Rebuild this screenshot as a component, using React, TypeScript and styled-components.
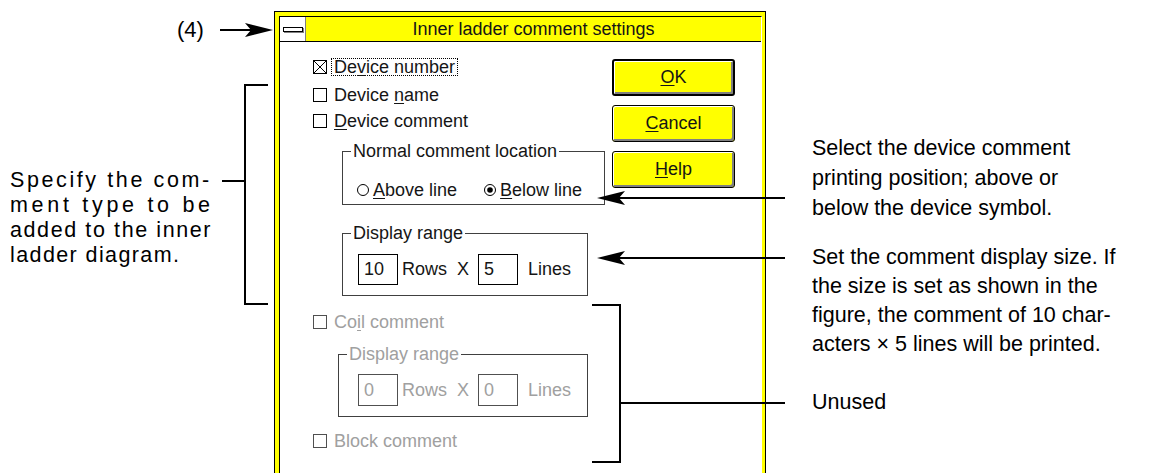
import React from 'react';
import styled, { createGlobalStyle } from 'styled-components';

const GlobalStyle = createGlobalStyle`
  html, body {
    margin: 0;
    padding: 0;
    background: #fff;
  }
  body {
    font-family: "Liberation Sans", Arial, sans-serif;
    color: #000;
  }
`;

const YELLOW = '#ffff00';

const Figure = styled.div`
  position: relative;
  display: flex;
  width: 1176px;
  height: 473px;
  overflow: hidden;
  background: #fff;
`;

/* ---------- annotations ---------- */

const LeftNotes = styled.div`
  flex: none;
  width: 274px;
  display: flex;
  flex-direction: column;
`;

const RightNotes = styled.div`
  flex: 1;
  display: flex;
  flex-direction: column;
  padding-left: 46px;
`;

const Tag = styled.div`
  margin: 18px 0 0 177px;
  font-size: 22px;
  line-height: 24px;
`;

const Note = styled.div<{ $top: number; $left?: number; $lh: number }>`
  margin-top: ${({ $top }) => $top}px;
  padding-left: ${({ $left }) => $left ?? 0}px;
  font-size: 21.5px;
  line-height: ${({ $lh }) => $lh}px;
  white-space: nowrap;
`;

const NoteLine = styled.div<{ $track?: number }>`
  letter-spacing: ${({ $track }) => $track ?? 0}px;
`;

const Callouts = styled.svg`
  position: absolute;
  left: 0;
  top: 0;
  pointer-events: none;
`;

/* ---------- dialog window ---------- */

const Window = styled.section`
  flex: none;
  box-sizing: border-box;
  width: 492px;
  height: 480px;
  margin-top: 11px;
  border: 1px solid #000;
  background: ${YELLOW};
  padding: 4px 3px 0 4px;
  display: flex;
  flex-direction: column;
  color: #151515;
`;

const Client = styled.div`
  flex: 1;
  display: flex;
  flex-direction: column;
  border: 1px solid #000;
  border-right-color: #fff;
  border-bottom: none;
  background: #fff;
`;

const TitleBar = styled.div`
  display: flex;
  height: 24px;
  border-bottom: 1px solid #000;
  background: ${YELLOW};
`;

const MenuBox = styled.div`
  flex: none;
  width: 25px;
  display: flex;
  align-items: center;
  justify-content: center;
  background: #fff;
  border-right: 1px solid #808080;
`;

const MenuGlyph = styled.div`
  width: 18px;
  height: 3px;
  border: 1px solid #000;
  background: #fff;
  box-shadow: 1px 1px 0 #808080;
`;

const Title = styled.div`
  flex: 1;
  text-align: center;
  font-size: 18px;
  line-height: 24px;
`;

const Body = styled.div`
  flex: 1;
  display: grid;
  grid-template-columns: 332px 123px;
  align-items: start;
`;

const Options = styled.div`
  display: flex;
  flex-direction: column;
  align-items: flex-start;
  padding-left: 33px;
`;

const CheckRow = styled.div<{ $top: number }>`
  display: flex;
  align-items: center;
  height: 20px;
  margin-top: ${({ $top }) => $top}px;
`;

const Label = styled.span<{ $disabled?: boolean; $focused?: boolean }>`
  margin-left: 4px;
  padding: 0 2px;
  font-size: 18px;
  line-height: 16px;
  color: ${({ $disabled }) => ($disabled ? '#a0a0a0' : 'inherit')};
  border: 1px dotted ${({ $focused }) => ($focused ? '#000' : 'transparent')};
  white-space: nowrap;
`;

const Key = styled.u`
  text-decoration-thickness: 1px;
  text-underline-offset: 2px;
`;

const Group = styled.fieldset<{
  $top: number;
  $indent: number;
  $width: number;
  $pad: string;
}>`
  box-sizing: border-box;
  width: ${({ $width }) => $width}px;
  margin: ${({ $top }) => $top}px 0 0 ${({ $indent }) => $indent}px;
  padding: ${({ $pad }) => $pad};
  border: 1px solid #404040;
  min-inline-size: 0;
`;

const Legend = styled.legend<{ $disabled?: boolean }>`
  margin-left: 8px;
  padding: 0 2px;
  font-size: 18px;
  line-height: 20px;
  color: ${({ $disabled }) => ($disabled ? '#a0a0a0' : 'inherit')};
`;

const RadioRow = styled.div`
  display: flex;
  align-items: center;
  height: 20px;
  gap: 27px;
  padding-left: 14px;
`;

const Radio = styled.label`
  display: flex;
  align-items: center;
  gap: 4px;
  font-size: 18px;
  white-space: nowrap;
`;

const RangeRow = styled.div<{ $inset: number; $disabled?: boolean }>`
  display: flex;
  align-items: center;
  padding-left: ${({ $inset }) => $inset}px;
  font-size: 18px;
  color: ${({ $disabled }) => ($disabled ? '#a0a0a0' : 'inherit')};
`;

const Field = styled.div<{ $height: number; $gap?: number; $disabled?: boolean }>`
  box-sizing: border-box;
  width: 40px;
  height: ${({ $height }) => $height}px;
  margin-left: ${({ $gap }) => $gap ?? 0}px;
  padding-left: 5px;
  border: 1px solid ${({ $disabled }) => ($disabled ? '#505050' : '#000')};
  display: flex;
  align-items: center;
`;

const Word = styled.span<{ $gap: number }>`
  margin-left: ${({ $gap }) => $gap}px;
`;

const Buttons = styled.div`
  display: flex;
  flex-direction: column;
  gap: 9px;
  margin-top: 17px;
`;

const Button = styled.button<{ $default?: boolean }>`
  box-sizing: border-box;
  width: 123px;
  height: 37px;
  padding: 0;
  font-family: "Liberation Sans", Arial, sans-serif;
  font-size: 18px;
  color: #151515;
  background: ${YELLOW};
  border: ${({ $default }) => ($default ? 2 : 1)}px solid #000;
  border-radius: 3px;
  box-shadow: inset 1px 1px 0 #fff, inset -2px -2px 0 #808080;
`;

/* ---------- small drawn parts ---------- */

const CheckBox = ({ checked, disabled }: { checked?: boolean; disabled?: boolean }) => {
  const c = disabled ? '#505050' : '#000';
  return (
    <svg width="14" height="14" viewBox="0 0 14 14">
      <rect x="0.5" y="0.5" width="13" height="13" fill="#fff" stroke={c} />
      {checked && <path d="M1 1 L13 13 M13 1 L1 13" stroke={c} strokeWidth="1" />}
    </svg>
  );
};

const RadioDot = ({ checked }: { checked?: boolean }) => (
  <svg width="12" height="12" viewBox="0 0 12 12">
    <circle cx="6" cy="6" r="5.5" fill="#fff" stroke="#000" />
    {checked && <circle cx="6" cy="6" r="2.8" fill="#000" />}
  </svg>
);

const head = (x: number, y: number, dir: 1 | -1) =>
  `M${x} ${y} L${x - dir * 28} ${y - 7} L${x - dir * 22} ${y} L${x - dir * 28} ${y + 7} Z`;

const CalloutLines = () => (
  <Callouts width="1176" height="473" viewBox="0 0 1176 473">
    <g stroke="#000" strokeWidth="2" fill="none">
      <line x1="220" y1="30" x2="252" y2="30" />
      <polyline points="268,85 245,85 245,304 268,304" />
      <line x1="222" y1="181" x2="245" y2="181" />
      <line x1="616" y1="198" x2="785" y2="198" />
      <line x1="616" y1="258" x2="785" y2="258" />
      <polyline points="592,305 620,305 620,462 592,462" />
      <line x1="620" y1="403" x2="785" y2="403" />
    </g>
    <g fill="#000">
      <path d={head(273, 30, 1)} />
      <path d={head(597, 198, -1)} />
      <path d={head(597, 258, -1)} />
    </g>
  </Callouts>
);

export default function App() {
  return (
    <>
      <GlobalStyle />
      <Figure>
        <LeftNotes>
          <Tag>(4)</Tag>
          <Note $top={126} $left={10} $lh={25}>
            <NoteLine $track={2.6}>Specify the com-</NoteLine>
            <NoteLine $track={3.7}>ment type to be</NoteLine>
            <NoteLine $track={1.6}>added to the inner</NoteLine>
            <NoteLine $track={1.4}>ladder diagram.</NoteLine>
          </Note>
        </LeftNotes>

        <Window>
          <Client>
            <TitleBar>
              <MenuBox>
                <MenuGlyph />
              </MenuBox>
              <Title>Inner ladder comment settings</Title>
            </TitleBar>
            <Body>
              <Options>
                <CheckRow $top={15}>
                  <CheckBox checked />
                  <Label $focused>
                    De<Key>v</Key>ice number
                  </Label>
                </CheckRow>
                <CheckRow $top={8}>
                  <CheckBox />
                  <Label>
                    Device <Key>n</Key>ame
                  </Label>
                </CheckRow>
                <CheckRow $top={6}>
                  <CheckBox />
                  <Label>
                    <Key>D</Key>evice comment
                  </Label>
                </CheckRow>

                <Group $top={10} $indent={29} $width={263} $pad="19px 0 4px 0">
                  <Legend>Normal comment location</Legend>
                  <RadioRow>
                    <Radio>
                      <RadioDot />
                      <span>
                        <Key>A</Key>bove line
                      </span>
                    </Radio>
                    <Radio>
                      <RadioDot checked />
                      <span>
                        <Key>B</Key>elow line
                      </span>
                    </Radio>
                  </RadioRow>
                </Group>

                <Group $top={18} $indent={29} $width={246} $pad="11px 0 10px 0">
                  <Legend>Display range</Legend>
                  <RangeRow $inset={15}>
                    <Field $height={31}>10</Field>
                    <Word $gap={4}>Rows</Word>
                    <Word $gap={10}>X</Word>
                    <Field $height={31} $gap={9}>5</Field>
                    <Word $gap={10}>Lines</Word>
                  </RangeRow>
                </Group>

                <CheckRow $top={16}>
                  <CheckBox disabled />
                  <Label $disabled>
                    Co<Key>i</Key>l comment
                  </Label>
                </CheckRow>

                <Group $top={12} $indent={25} $width={250} $pad="10px 0 10px 0">
                  <Legend $disabled>Display range</Legend>
                  <RangeRow $inset={19} $disabled>
                    <Field $height={32} $disabled>0</Field>
                    <Word $gap={4}>Rows</Word>
                    <Word $gap={10}>X</Word>
                    <Field $height={32} $gap={9} $disabled>0</Field>
                    <Word $gap={10}>Lines</Word>
                  </RangeRow>
                </Group>

                <CheckRow $top={14}>
                  <CheckBox disabled />
                  <Label $disabled>Block comment</Label>
                </CheckRow>
              </Options>

              <Buttons>
                <Button $default>
                  <Key>O</Key>K
                </Button>
                <Button>
                  <Key>C</Key>ancel
                </Button>
                <Button>
                  <Key>H</Key>elp
                </Button>
              </Buttons>
            </Body>
          </Client>
        </Window>

        <RightNotes>
          <Note $top={133} $lh={30}>
            <NoteLine>Select the device comment</NoteLine>
            <NoteLine>printing position; above or</NoteLine>
            <NoteLine>below the device symbol.</NoteLine>
          </Note>
          <Note $top={20} $lh={29}>
            <NoteLine>Set the comment display size. If</NoteLine>
            <NoteLine>the size is set as shown in the</NoteLine>
            <NoteLine>figure, the comment of 10 char-</NoteLine>
            <NoteLine>acters × 5 lines will be printed.</NoteLine>
          </Note>
          <Note $top={29} $lh={29}>
            <NoteLine>Unused</NoteLine>
          </Note>
        </RightNotes>

        <CalloutLines />
      </Figure>
    </>
  );
}
